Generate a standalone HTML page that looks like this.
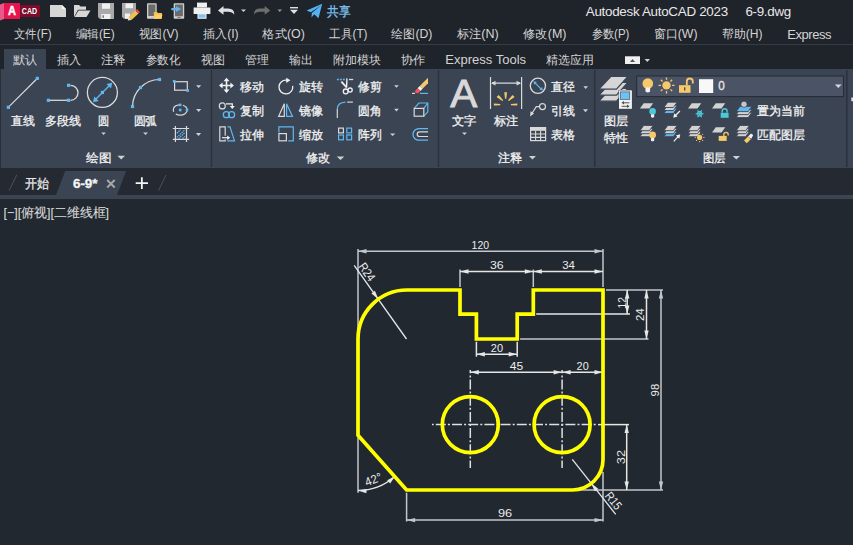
<!DOCTYPE html>
<html><head><meta charset="utf-8">
<style>
*{margin:0;padding:0}
html,body{width:853px;height:545px;overflow:hidden;background:#212830}
svg{position:absolute;left:0;top:0;display:block}
text{font-family:"Liberation Sans",sans-serif;white-space:pre}
</style></head><body>
<svg width="853" height="545" viewBox="0 0 853 545">
<rect x="0" y="0" width="853" height="69" fill="#1f232a"/>
<rect x="0" y="44" width="853" height="1" fill="#363c47"/>
<rect x="0" y="69" width="853" height="99" fill="#3b4453"/>
<rect x="0" y="69" width="1" height="99" fill="#2a2f38"/>
<rect x="0" y="168" width="853" height="27" fill="#242932"/>
<rect x="0" y="195" width="853" height="4" fill="#3b4453"/>
<rect x="0" y="199" width="853" height="346" fill="#212830"/>
<polygon points="0,4.5 4,3 4,19 0,20.5" fill="#e8588a"/>
<rect x="4" y="3" width="16" height="16" fill="#e8144f"/>
<rect x="20" y="5" width="20" height="12" fill="#7d0b2c"/>
<text x="8" y="15.1" font-size="12.6" font-weight="bold" fill="#fff" stroke="#fff" stroke-width="0.5" textLength="8" lengthAdjust="spacingAndGlyphs">A</text>
<text x="21.8" y="13.9" font-size="8.2" font-weight="bold" fill="#fff" textLength="15.3" lengthAdjust="spacingAndGlyphs">CAD</text>
<path d="M50,5 H62 L66,9 V17 H50 Z" fill="#d6d6d6"/><path d="M62,5 L66,9 H62 Z" fill="#f4f4f4"/>
<path d="M74,5 H79 L80.5,6.5 H86 V9.8 H78 L74,17 Z" fill="#d6d6d6"/><path d="M78.5,10.5 H90.5 L86.5,17 H74.5 Z" fill="#d6d6d6"/>
<path d="M98,3 H114 V19 H100 L98,17 Z" fill="#a9a9a9"/><rect x="102" y="3.4" width="8" height="5.4" fill="#f0f0f0"/><rect x="101.3" y="14" width="9.2" height="5" fill="#f0f0f0"/><rect x="102.5" y="15.3" width="1.5" height="2.5" fill="#777"/>
<path d="M122,3 H136 V12 L130,18.8 H124 L122,17 Z" fill="#a9a9a9"/><rect x="125.5" y="3.4" width="7.5" height="4.8" fill="#f0f0f0"/><rect x="125" y="13.5" width="5" height="5.3" fill="#f0f0f0"/>
<path d="M135.5,10.5 L138.5,13.5 L131.5,20 L128.5,17 Z" fill="#f2c14e"/><path d="M135.5,10.5 L137,9 L140,12 L138.5,13.5 Z" fill="#e8434f"/><path d="M128.5,17 L131.5,20 L127.8,20.5 Z" fill="#e0e0e0"/>
<rect x="147" y="3.2" width="9.7" height="15.6" rx="0.8" fill="#cfcfcf"/><rect x="148.3" y="4.5" width="7.1" height="11.5" fill="#6a6a6a"/><path d="M153.8,12 H157 L158,13 H162 V18.8 H153.8 Z" fill="#f2c14e"/><path d="M155,14.8 H162.5 L161,18.8 H153.8 Z" fill="#ffd36a"/>
<rect x="173.7" y="3.2" width="10.5" height="15.6" rx="0.8" fill="#cfcfcf"/><rect x="175" y="4.5" width="7.9" height="11.8" fill="#6a6a6a"/><rect x="177.5" y="17" width="3" height="0.9" fill="#6a6a6a"/>
<path d="M171.3,8 H176 V6.3 L181.2,9.1 L176,11.9 V10.2 H171.3 Z" fill="#5ab4f0"/>
<rect x="197" y="2.6" width="10" height="4.8" fill="#f0f0f0"/><rect x="193.6" y="7.5" width="16.8" height="6.5" fill="#f0f0f0"/><rect x="197.5" y="13" width="9" height="5.8" fill="#f0f0f0"/><rect x="198.6" y="14.3" width="6.8" height="3.4" fill="#7fc4f0"/>
<path d="M218,10.4 L223.5,6 V8.5 H228 Q234.5,8.5 234.3,14.7 Q232.5,11.8 228,11.8 H223.5 V14.7 Z" fill="#e0e0e0"/>
<path d="M241,9.5 H246 L243.5,12 Z" fill="#d0d0d0"/>
<path d="M270.2,10.4 L264.7,6 V8.5 H260.2 Q253.7,8.5 253.9,14.7 Q255.7,11.8 260.2,11.8 H264.7 V14.7 Z" fill="#6e6e6e"/>
<path d="M277.5,9.5 H282 L279.75,12 Z" fill="#9a9a9a"/>
<rect x="290" y="7" width="8" height="1.4" fill="#e0e0e0"/><path d="M290,9.8 H298 L294,14 Z" fill="#e0e0e0"/>
<path d="M306.6,10.5 L322.2,3.8 L318.5,18.2 L314.2,14.3 L311.5,17.5 L311.8,13 L321,5.5 L310.8,12.2 Z" fill="#55b2ee"/>
<text x="327.4" y="16.0" font-size="12.5" fill="#7ec5f4" font-weight="normal" textLength="23.4" lengthAdjust="spacingAndGlyphs" stroke="#7ec5f4" stroke-width="0.3">共享</text>
<text x="585.8" y="15.6" font-size="13.4" fill="#e8e8e8" font-weight="normal" textLength="142.3" lengthAdjust="spacing">Autodesk AutoCAD 2023</text>
<text x="745.4" y="15.6" font-size="13.4" fill="#e8e8e8" font-weight="normal" textLength="45.8" lengthAdjust="spacing">6-9.dwg</text>
<text x="14.0" y="38.3" font-size="12.2" fill="#d4d4d4" font-weight="normal" textLength="37.7" lengthAdjust="spacingAndGlyphs">文件(F)</text>
<text x="75.6" y="38.3" font-size="12.2" fill="#d4d4d4" font-weight="normal" textLength="39.1" lengthAdjust="spacingAndGlyphs">编辑(E)</text>
<text x="138.6" y="38.3" font-size="12.2" fill="#d4d4d4" font-weight="normal" textLength="39.9" lengthAdjust="spacingAndGlyphs">视图(V)</text>
<text x="203.1" y="38.3" font-size="12.2" fill="#d4d4d4" font-weight="normal" textLength="35.6" lengthAdjust="spacingAndGlyphs">插入(I)</text>
<text x="262.4" y="38.3" font-size="12.2" fill="#d4d4d4" font-weight="normal" textLength="42.6" lengthAdjust="spacingAndGlyphs">格式(O)</text>
<text x="329.3" y="38.3" font-size="12.2" fill="#d4d4d4" font-weight="normal" textLength="38.2" lengthAdjust="spacingAndGlyphs">工具(T)</text>
<text x="391.3" y="38.3" font-size="12.2" fill="#d4d4d4" font-weight="normal" textLength="41.1" lengthAdjust="spacingAndGlyphs">绘图(D)</text>
<text x="456.6" y="38.3" font-size="12.2" fill="#d4d4d4" font-weight="normal" textLength="42.1" lengthAdjust="spacingAndGlyphs">标注(N)</text>
<text x="523.2" y="38.3" font-size="12.2" fill="#d4d4d4" font-weight="normal" textLength="43.3" lengthAdjust="spacingAndGlyphs">修改(M)</text>
<text x="591.5" y="38.3" font-size="12.2" fill="#d4d4d4" font-weight="normal" textLength="37.9" lengthAdjust="spacingAndGlyphs">参数(P)</text>
<text x="653.6" y="38.3" font-size="12.2" fill="#d4d4d4" font-weight="normal" textLength="43.9" lengthAdjust="spacingAndGlyphs">窗口(W)</text>
<text x="722.0" y="38.3" font-size="12.2" fill="#d4d4d4" font-weight="normal" textLength="40.5" lengthAdjust="spacingAndGlyphs">帮助(H)</text>
<text x="787.2" y="39.0" font-size="13" fill="#d4d4d4" font-weight="normal" textLength="44.4" lengthAdjust="spacing">Express</text>
<rect x="4" y="49" width="42" height="20" fill="#3b4453"/>
<text x="12.9" y="63.6" font-size="12.2" fill="#d4d4d4" font-weight="normal" textLength="24.5" lengthAdjust="spacingAndGlyphs">默认</text>
<text x="56.7" y="63.6" font-size="12.2" fill="#d4d4d4" font-weight="normal" textLength="24.5" lengthAdjust="spacingAndGlyphs">插入</text>
<text x="100.6" y="63.6" font-size="12.2" fill="#d4d4d4" font-weight="normal" textLength="25.0" lengthAdjust="spacingAndGlyphs">注释</text>
<text x="145.7" y="63.6" font-size="12.2" fill="#d4d4d4" font-weight="normal" textLength="34.8" lengthAdjust="spacingAndGlyphs">参数化</text>
<text x="200.7" y="63.6" font-size="12.2" fill="#d4d4d4" font-weight="normal" textLength="24.1" lengthAdjust="spacingAndGlyphs">视图</text>
<text x="245.4" y="63.6" font-size="12.2" fill="#d4d4d4" font-weight="normal" textLength="23.8" lengthAdjust="spacingAndGlyphs">管理</text>
<text x="288.5" y="63.6" font-size="12.2" fill="#d4d4d4" font-weight="normal" textLength="24.0" lengthAdjust="spacingAndGlyphs">输出</text>
<text x="333.1" y="63.6" font-size="12.2" fill="#d4d4d4" font-weight="normal" textLength="48.3" lengthAdjust="spacingAndGlyphs">附加模块</text>
<text x="400.7" y="63.6" font-size="12.2" fill="#d4d4d4" font-weight="normal" textLength="24.5" lengthAdjust="spacingAndGlyphs">协作</text>
<text x="445.2" y="64.0" font-size="13" fill="#d4d4d4" font-weight="normal" textLength="80.9" lengthAdjust="spacing">Express Tools</text>
<text x="545.8" y="63.6" font-size="12.2" fill="#d4d4d4" font-weight="normal" textLength="47.7" lengthAdjust="spacingAndGlyphs">精选应用</text>
<rect x="625" y="56.3" width="15" height="7.7" fill="#f0f0f0"/><path d="M630,62 H635 L632.5,59 Z" fill="#555"/>
<path d="M644.5,59 H650 L647.25,62 Z" fill="#d0d0d0"/>
<line x1="9.1" y1="190.6" x2="16.7" y2="175" stroke="#4a5260" stroke-width="1"/>
<text x="25.0" y="188.0" font-size="12.5" fill="#e8e8e8" font-weight="normal" textLength="24.2" lengthAdjust="spacingAndGlyphs" stroke="#e8e8e8" stroke-width="0.3">开始</text>
<polygon points="65.2,171 126.2,171 117,195 56,195" fill="#3b4453"/>
<text x="72.9" y="188.2" font-size="12.5" fill="#f4f4f4" font-weight="bold" textLength="24.7" lengthAdjust="spacingAndGlyphs" stroke="#f4f4f4" stroke-width="0.3">6-9*</text>
<path d="M107.2,180 L114.7,187.5 M114.7,180 L107.2,187.5" stroke="#a8a8a8" stroke-width="1.9"/>
<path d="M135.7,183.1 H148 M141.85,177.2 V189" stroke="#f4f4f4" stroke-width="1.8"/>
<line x1="158.5" y1="190.6" x2="166" y2="175" stroke="#4a5260" stroke-width="1"/>
<text x="3.5" y="217.0" font-size="12.5" fill="#d8d8d8" font-weight="normal" textLength="105.5" lengthAdjust="spacingAndGlyphs" stroke="#d8d8d8" stroke-width="0.1">[−][俯视][二维线框]</text>
<rect x="210.75" y="70" width="1.5" height="97" fill="#2c323c"/>
<rect x="437.75" y="70" width="1.5" height="97" fill="#2c323c"/>
<rect x="593.95" y="70" width="1.5" height="97" fill="#2c323c"/>
<rect x="846.05" y="70" width="1.5" height="97" fill="#2c323c"/>
<line x1="9.5" y1="106.2" x2="36.2" y2="79.5" stroke="#d9d9d9" stroke-width="1.2"/><rect x="6.80" y="105.70" width="3.2" height="3.2" fill="#5fb8f2"/><rect x="35.70" y="76.80" width="3.2" height="3.2" fill="#5fb8f2"/>
<text x="11.0" y="125.0" font-size="12" fill="#f2f2f2" font-weight="normal" textLength="23.9" lengthAdjust="spacingAndGlyphs" stroke="#f2f2f2" stroke-width="0.3">直线</text>
<line x1="50" y1="100.3" x2="67" y2="100.3" stroke="#d9d9d9" stroke-width="1.3"/><path d="M70.5,85.3 A7.5,7.5 0 0 1 70.5,100.3" fill="none" stroke="#d9d9d9" stroke-width="1.3"/><rect x="46.80" y="98.70" width="3.2" height="3.2" fill="#5fb8f2"/><rect x="67.00" y="98.70" width="3.2" height="3.2" fill="#5fb8f2"/><rect x="67.00" y="83.70" width="3.2" height="3.2" fill="#5fb8f2"/>
<text x="45.0" y="125.0" font-size="12" fill="#f2f2f2" font-weight="normal" textLength="36.3" lengthAdjust="spacingAndGlyphs" stroke="#f2f2f2" stroke-width="0.3">多段线</text>
<circle cx="102.4" cy="92.45" r="15" fill="none" stroke="#d9d9d9" stroke-width="1.3"/>
<line x1="95" y1="100" x2="110.2" y2="84.8" stroke="#5fb8f2" stroke-width="1.3"/><path d="M93,102.2 L94.2,96.5 L98.7,101 Z M112.2,82.8 L111,88.5 L106.5,84 Z" fill="#5fb8f2"/><rect x="100.80" y="90.85" width="3.2" height="3.2" fill="#5fb8f2"/>
<text x="97.8" y="125.0" font-size="12" fill="#f2f2f2" font-weight="normal" textLength="11.2" lengthAdjust="spacingAndGlyphs" stroke="#f2f2f2" stroke-width="0.3">圆</text>
<path d="M101.3,132.4 H105.8 L103.55,135 Z" fill="#d0d0d0"/>
<path d="M132.5,106.5 A27.32,27.32 0 0 1 159.5,79.5" fill="none" stroke="#d9d9d9" stroke-width="1.2"/><rect x="130.90" y="104.90" width="3.2" height="3.2" fill="#5fb8f2"/><rect x="138.90" y="85.90" width="3.2" height="3.2" fill="#5fb8f2"/><rect x="157.90" y="77.90" width="3.2" height="3.2" fill="#5fb8f2"/>
<text x="133.5" y="125.0" font-size="12" fill="#f2f2f2" font-weight="normal" textLength="23.7" lengthAdjust="spacingAndGlyphs" stroke="#f2f2f2" stroke-width="0.3">圆弧</text>
<path d="M143.1,132.4 H148 L145.55,135 Z" fill="#d0d0d0"/>
<rect x="174.6" y="81.7" width="12.7" height="8.5" fill="none" stroke="#d9d9d9" stroke-width="1.2"/><rect x="172.90" y="80.00" width="2.6" height="2.6" fill="#5fb8f2"/><rect x="186.40" y="89.30" width="2.6" height="2.6" fill="#5fb8f2"/>
<path d="M196.1,85.2 H201.2 L198.64999999999998,88 Z" fill="#d0d0d0"/>
<ellipse cx="180.2" cy="110" rx="6.9" ry="5.2" fill="none" stroke="#d9d9d9" stroke-width="1.2" stroke-dasharray="14 3 10 4"/><rect x="178.90" y="103.60" width="2.6" height="2.6" fill="#5fb8f2"/><rect x="178.90" y="108.70" width="2.6" height="2.6" fill="#5fb8f2"/><rect x="185.70" y="108.70" width="2.6" height="2.6" fill="#5fb8f2"/>
<path d="M196.1,109.1 H201.2 L198.64999999999998,112 Z" fill="#d0d0d0"/>
<path d="M175.4,126 V142 M186.5,126 V142 M172.8,128.5 H189.1 M172.8,139.4 H189.1" stroke="#d9d9d9" stroke-width="1.2"/>
<path d="M176.8,133.2 L180.6,129.6 M176.8,137.4 L184.9,129.8 M178.6,138.6 L185,132.6 M182.6,138.6 L185,136.4" stroke="#5fb8f2" stroke-width="1.3" stroke-dasharray="1.5 0.7"/>
<path d="M195.9,133 H201.1 L198.5,136 Z" fill="#d0d0d0"/>
<text x="86.4" y="162.2" font-size="12" fill="#f2f2f2" font-weight="normal" textLength="25.3" lengthAdjust="spacingAndGlyphs" stroke="#f2f2f2" stroke-width="0.3">绘图</text>
<path d="M117.4,155.8 H125 L121.2,159.5 Z" fill="#d0d0d0"/>
<path d="M220.5,85.5 H232.5 M226.5,79.5 V91.5" stroke="#f0f0f0" stroke-width="1.6"/><path d="M219,85.5 L222.6,82.5 V88.5 Z M233.9,85.5 L230.4,82.5 V88.5 Z M226.5,77.8 L223.5,81.3 H229.5 Z M226.5,93.1 L223.5,89.6 H229.5 Z" fill="#f0f0f0"/>
<text x="240.0" y="91.0" font-size="12" fill="#f2f2f2" font-weight="normal" textLength="24.0" lengthAdjust="spacingAndGlyphs" stroke="#f2f2f2" stroke-width="0.3">移动</text>
<path d="M286.8,80.15 A6.9,6.9 0 1 0 292.7,85.9" fill="none" stroke="#f0f0f0" stroke-width="1.3"/><path d="M290.4,80.3 L286.2,77.7 V82.9 Z" fill="#f0f0f0"/>
<text x="298.7" y="91.0" font-size="12" fill="#f2f2f2" font-weight="normal" textLength="24.3" lengthAdjust="spacingAndGlyphs" stroke="#f2f2f2" stroke-width="0.3">旋转</text>
<circle cx="222.3" cy="105.9" r="3" fill="none" stroke="#d9d9d9" stroke-width="1.2"/><path d="M226,103.9 H232.3 V106.5" fill="none" stroke="#f0f0f0" stroke-width="1.2"/><path d="M229.8,106 H234.8 L232.3,109 Z" fill="#f0f0f0"/><circle cx="226.3" cy="114.7" r="3" fill="none" stroke="#5fb8f2" stroke-width="1.3"/><circle cx="231.6" cy="114.7" r="3" fill="none" stroke="#5fb8f2" stroke-width="1.3"/>
<text x="240.0" y="115.0" font-size="12" fill="#f2f2f2" font-weight="normal" textLength="24.0" lengthAdjust="spacingAndGlyphs" stroke="#f2f2f2" stroke-width="0.3">复制</text>
<path d="M278.6,116.4 L284.3,103.8 V116.4 Z" fill="none" stroke="#d9d9d9" stroke-width="1.2" stroke-linejoin="miter"/><path d="M286.6,103.8 V116.4 H292.5 Z" fill="none" stroke="#5fb8f2" stroke-width="1.2"/>
<text x="298.7" y="115.0" font-size="12" fill="#f2f2f2" font-weight="normal" textLength="24.3" lengthAdjust="spacingAndGlyphs" stroke="#f2f2f2" stroke-width="0.3">镜像</text>
<path d="M225.2,135.8 V126.8 H219.8 V140.8 H225.2 V139.6" fill="none" stroke="#d9d9d9" stroke-width="1.2"/><path d="M222,137.7 H228.5" stroke="#f0f0f0" stroke-width="1.2"/><path d="M230.2,137.7 L227.2,135.5 V139.9 Z" fill="#f0f0f0"/><path d="M227.5,126.8 H230 L234.5,140.8 H227.2" fill="none" stroke="#5fb8f2" stroke-width="1.2"/>
<text x="240.0" y="139.0" font-size="12" fill="#f2f2f2" font-weight="normal" textLength="24.0" lengthAdjust="spacingAndGlyphs" stroke="#f2f2f2" stroke-width="0.3">拉伸</text>
<path d="M278.9,132.5 V126.8 H293.3 V140.8 H288.2" fill="none" stroke="#5fb8f2" stroke-width="1.2"/><rect x="278.9" y="133.6" width="7.5" height="7.2" fill="none" stroke="#d9d9d9" stroke-width="1.2"/>
<text x="298.7" y="139.0" font-size="12" fill="#f2f2f2" font-weight="normal" textLength="24.3" lengthAdjust="spacingAndGlyphs" stroke="#f2f2f2" stroke-width="0.3">缩放</text>
<path d="M336.9,79.5 H344.8" stroke="#5fb8f2" stroke-width="1.3" stroke-dasharray="1.9 1.1"/><path d="M349,79.5 H353.2" stroke="#d9d9d9" stroke-width="1.3"/>
<path d="M346.3,78 L347.6,78.8 L347.3,87.5 H345.7 Z" fill="#f0f0f0"/><path d="M340.6,82.2 L342.2,81 L347.2,87 L346,88 Z" fill="#f0f0f0"/><circle cx="345.7" cy="91.4" r="2.4" fill="none" stroke="#f0f0f0" stroke-width="1.3"/><circle cx="350.1" cy="90.1" r="2.1" fill="none" stroke="#f0f0f0" stroke-width="1.3"/>
<text x="358.4" y="91.0" font-size="12" fill="#f2f2f2" font-weight="normal" textLength="23.5" lengthAdjust="spacingAndGlyphs" stroke="#f2f2f2" stroke-width="0.3">修剪</text>
<path d="M394.1,85.2 H398.8 L396.45000000000005,87.8 Z" fill="#d0d0d0"/>
<path d="M419.8,86 L428,77.7 V83.3 L422.6,88.8 Z" fill="#f7c96a"/><path d="M417.6,88.2 L419.8,86 L422.6,88.8 L420.4,91 Z" fill="#f4f4f4"/><path d="M415.4,90.4 L417.6,88.2 L420.4,91 L418.2,93.2 Q415.2,93.8 414.9,91.6 Z" fill="#f0555a"/><path d="M412,93.4 H415" stroke="#d9d9d9" stroke-width="1.2"/><path d="M419.9,93.4 H428" stroke="#5fb8f2" stroke-width="1.2"/>
<path d="M337.3,118 V109" stroke="#d9d9d9" stroke-width="1.2"/><path d="M337.3,109 Q337.5,102.5 345.5,102.1" fill="none" stroke="#5fb8f2" stroke-width="1.2"/><path d="M347.2,102.1 H352.9" stroke="#d9d9d9" stroke-width="1.2"/>
<text x="358.4" y="115.0" font-size="12" fill="#f2f2f2" font-weight="normal" textLength="23.5" lengthAdjust="spacingAndGlyphs" stroke="#f2f2f2" stroke-width="0.3">圆角</text>
<path d="M394.1,108.8 H398.8 L396.45000000000005,111.5 Z" fill="#d0d0d0"/>
<path d="M414.2,108.4 L418.8,103 H427.8 V111.8 L423.8,116.2 M423.8,108.4 L427.8,103" fill="none" stroke="#5fb8f2" stroke-width="1.2"/><rect x="414.2" y="108.4" width="9.6" height="7.8" fill="none" stroke="#d9d9d9" stroke-width="1.2"/>
<rect x="338.6" y="128.1" width="4.8" height="4.8" fill="none" stroke="#d9d9d9" stroke-width="1.2"/><rect x="346.8" y="128.1" width="4.8" height="4.8" fill="none" stroke="#5fb8f2" stroke-width="1.2"/><rect x="338.6" y="135" width="4.8" height="4.8" fill="none" stroke="#5fb8f2" stroke-width="1.2"/><rect x="346.8" y="135" width="4.8" height="4.8" fill="none" stroke="#5fb8f2" stroke-width="1.2"/>
<text x="358.0" y="139.0" font-size="12" fill="#f2f2f2" font-weight="normal" textLength="23.5" lengthAdjust="spacingAndGlyphs" stroke="#f2f2f2" stroke-width="0.3">阵列</text>
<path d="M390,133.6 H395.3 L392.65,136 Z" fill="#d0d0d0"/>
<path d="M428.1,128.6 H418.8 A5.8,5.8 0 0 0 418.8,140.2 H428.1" fill="none" stroke="#5fb8f2" stroke-width="1.3"/><path d="M428.1,131.9 H419.5 A2.3,2.3 0 0 0 419.5,136.5 H428.1" fill="none" stroke="#d9d9d9" stroke-width="1.2"/>
<text x="305.7" y="162.2" font-size="12" fill="#f2f2f2" font-weight="normal" textLength="24.3" lengthAdjust="spacingAndGlyphs" stroke="#f2f2f2" stroke-width="0.3">修改</text>
<path d="M336.7,156.5 H344.3 L340.5,160 Z" fill="#d0d0d0"/>
<text x="450.3" y="106.8" font-size="39" fill="#d9d9d9" stroke="#d9d9d9" stroke-width="0.9" textLength="27" lengthAdjust="spacingAndGlyphs">A</text>
<text x="452.0" y="125.0" font-size="12" fill="#f2f2f2" font-weight="normal" textLength="24.5" lengthAdjust="spacingAndGlyphs" stroke="#f2f2f2" stroke-width="0.3">文字</text>
<path d="M462,132.4 H467 L464.5,135 Z" fill="#d0d0d0"/>
<path d="M490.5,77.1 V109.1 M521.6,77.1 V109.1 M492,83.2 H520" stroke="#d9d9d9" stroke-width="1.2"/><path d="M491,83.2 L495.5,80.8 V85.6 Z M521.1,83.2 L516.6,80.8 V85.6 Z" fill="#d9d9d9"/>
<path d="M504.3,92.3 H507 L506.3,98.8 H505 Z M496.6,96.9 L498.7,95.1 L503.2,100.2 L502.3,101 Z M514.6,96.9 L512.5,95.1 L508,100.2 L508.9,101 Z M493.8,103.4 L494,105.6 L500.4,105.2 L500.2,104 Z M517.4,103.4 L517.2,105.6 L510.8,105.2 L511,104 Z" fill="#f7c96a"/>
<text x="493.9" y="125.0" font-size="12" fill="#f2f2f2" font-weight="normal" textLength="24.4" lengthAdjust="spacingAndGlyphs" stroke="#f2f2f2" stroke-width="0.3">标注</text>
<circle cx="537.9" cy="85.8" r="7.6" fill="none" stroke="#d9d9d9" stroke-width="1.3"/><line x1="534.5" y1="82.3" x2="541.5" y2="89.3" stroke="#5fb8f2" stroke-width="1.2"/><path d="M533.4,81.2 L536.9,82 L534.2,84.7 Z M542.9,90.6 L539.4,89.8 L542.1,87.1 Z" fill="#5fb8f2"/>
<text x="550.9" y="91.0" font-size="12" fill="#f2f2f2" font-weight="normal" textLength="24.0" lengthAdjust="spacingAndGlyphs" stroke="#f2f2f2" stroke-width="0.3">直径</text>
<path d="M583.4,86.2 H588 L585.7,89 Z" fill="#d0d0d0"/>
<circle cx="542.5" cy="106.6" r="3" fill="none" stroke="#d9d9d9" stroke-width="1.2"/><path d="M539.5,106.6 H536.3 L531.5,114" fill="none" stroke="#d9d9d9" stroke-width="1.2"/><path d="M530.1,116.4 L530.6,111.3 L534,113.5 Z" fill="#d9d9d9"/>
<text x="550.9" y="115.0" font-size="12" fill="#f2f2f2" font-weight="normal" textLength="24.0" lengthAdjust="spacingAndGlyphs" stroke="#f2f2f2" stroke-width="0.3">引线</text>
<path d="M583,109.3 H588 L585.5,112.2 Z" fill="#d0d0d0"/>
<rect x="530.6" y="127.6" width="15" height="13" fill="none" stroke="#d9d9d9" stroke-width="1.2"/><rect x="530.6" y="127.6" width="15" height="3.2" fill="#d9d9d9"/><path d="M530.6,134 H545.6 M530.6,137.4 H545.6 M535.6,130.8 V140.6 M540.6,130.8 V140.6" stroke="#d9d9d9" stroke-width="1.1"/>
<text x="550.9" y="139.0" font-size="12" fill="#f2f2f2" font-weight="normal" textLength="24.0" lengthAdjust="spacingAndGlyphs" stroke="#f2f2f2" stroke-width="0.3">表格</text>
<text x="497.7" y="162.2" font-size="12" fill="#f2f2f2" font-weight="normal" textLength="24.3" lengthAdjust="spacingAndGlyphs" stroke="#f2f2f2" stroke-width="0.3">注释</text>
<path d="M529,156 H535.9 L532.45,159.5 Z" fill="#d0d0d0"/>
<path d="M599,101.2 L610.8,88.5 H627.8 L616.5,101.2 Z" fill="#d6d6d6" stroke="#3b4453" stroke-width="1.2"/>
<path d="M599,95.2 L610.8,82.5 H627.8 L616.5,95.2 Z" fill="#d6d6d6" stroke="#3b4453" stroke-width="1.2"/>
<path d="M599,89.2 L610.8,76.5 H627.8 L616.5,89.2 Z" fill="#d6d6d6" stroke="#3b4453" stroke-width="1.2"/>
<rect x="618.6" y="90" width="13.6" height="19.2" fill="#3b4453"/>
<rect x="619" y="90.4" width="12.9" height="18.4" fill="#f2f2f2"/><rect x="620.2" y="91.9" width="9.6" height="7.5" fill="#6fc0f5" stroke="#3a3f46" stroke-width="0.6"/><path d="M623.5,102.8 H629.4 M621.6,106.3 H627.5" stroke="#505050" stroke-width="1"/><path d="M621.4,102.8 L624,101 V104.6 Z M629.6,106.3 L627,104.5 V108.1 Z" fill="#505050"/>
<text x="604.1" y="125.0" font-size="12" fill="#f2f2f2" font-weight="normal" textLength="24.4" lengthAdjust="spacingAndGlyphs" stroke="#f2f2f2" stroke-width="0.3">图层</text>
<text x="604.1" y="142.3" font-size="12" fill="#f2f2f2" font-weight="normal" textLength="24.4" lengthAdjust="spacingAndGlyphs" stroke="#f2f2f2" stroke-width="0.3">特性</text>
<rect x="636.7" y="76" width="206.8" height="20.6" fill="#4b5466" stroke="#262b33" stroke-width="1"/>
<circle cx="647.8" cy="83.6" r="5.3" fill="#f7c96a"/><path d="M645.5,87.5 H650.1 V91.5 Q647.8,93.5 645.5,91.5 Z" fill="#f4f4f4"/>
<circle cx="666.5" cy="85.4" r="4.2" fill="#f7c96a"/><path d="M672.10,85.40 L674.50,85.40 M670.46,89.36 L672.16,91.06 M666.50,91.00 L666.50,93.40 M662.54,89.36 L660.84,91.06 M660.90,85.40 L658.50,85.40 M662.54,81.44 L660.84,79.74 M666.50,79.80 L666.50,77.40 M670.46,81.44 L672.16,79.74 " stroke="#f7c96a" stroke-width="1.3"/>
<rect x="679" y="85.2" width="11.5" height="7.6" fill="#f7c96a"/><rect x="684" y="87.3" width="1.4" height="3.2" fill="#4b5466"/><path d="M686.8,85.2 V81.5 A3,3 0 0 1 692.8,81.5 V83.5" fill="none" stroke="#f7c96a" stroke-width="1.8"/>
<rect x="699" y="79.2" width="14.2" height="13.8" fill="#f8f8f8"/>
<text x="718.3" y="89.8" font-size="12" fill="#e8e8e8" font-weight="normal" textLength="6.5" lengthAdjust="spacingAndGlyphs" stroke="#e8e8e8" stroke-width="0.3">0</text>
<path d="M834.9,84.4 H841.7 L838.3,88 Z" fill="#d8d8d8"/>
<path d="M639.9,108.6 L643.6999999999999,103.3 H653.1999999999999 L649.4,108.6 Z" fill="#d2d2d2"/><circle cx="652.6" cy="111.4" r="3.3" fill="#4cc9d6"/><path d="M651,114.3 H654.2 V117 Q652.6,118.3 651,117 Z" fill="#f0f0f0"/>
<path d="M663.9,113.5 L667.6999999999999,108.2 H677.1999999999999 L673.4,113.5 Z" fill="#5fb8f2" stroke="#3b4453" stroke-width="0.9"/><path d="M663.9,110.5 L667.6999999999999,105.2 H677.1999999999999 L673.4,110.5 Z" fill="#d2d2d2" stroke="#3b4453" stroke-width="0.9"/><path d="M663.9,107.5 L667.6999999999999,102.2 H677.1999999999999 L673.4,107.5 Z" fill="#d2d2d2" stroke="#3b4453" stroke-width="0.9"/><path d="M679.9,111 L674.5,116.5" stroke="#f0f0f0" stroke-width="1.2"/><path d="M673.3,117.7 L674.2,113.2 L677.6,116.6 Z" fill="#f0f0f0"/>
<path d="M688,108.6 L691.8,103.3 H701.3 L697.5,108.6 Z" fill="#d2d2d2"/><path d="M695.6,113.8 H703.6 M697.6,110.3 L701.6,117.3 M701.6,110.3 L697.6,117.3" stroke="#4cc9d6" stroke-width="1.1"/><polygon points="702.1,113.8 700.85,116 698.35,116 697.1,113.8 698.35,111.6 700.85,111.6" fill="none" stroke="#4cc9d6" stroke-width="1.1"/>
<path d="M712,108.6 L715.8,103.3 H725.3 L721.5,108.6 Z" fill="#d2d2d2"/><rect x="720.7" y="112.8" width="7.9" height="5" fill="#4cc9d6"/><path d="M722.2,112.8 V111.2 A2.45,2.45 0 0 1 727.1,111.2 V112.8" fill="none" stroke="#4cc9d6" stroke-width="1.4"/>
<path d="M736.2,117.6 L740.0,112.3 H752.0 L748.2,117.6 Z" fill="#d2d2d2" stroke="#3b4453" stroke-width="0.9"/><path d="M736.2,114.6 L740.0,109.3 H752.0 L748.2,114.6 Z" fill="#d2d2d2" stroke="#3b4453" stroke-width="0.9"/><path d="M736.2,111.6 L740.0,106.3 H752.0 L748.2,111.6 Z" fill="#5fb8f2" stroke="#3b4453" stroke-width="0.9"/><circle cx="744" cy="104.3" r="3.1" fill="#c8c8c8" stroke="#3b4453" stroke-width="0.7"/>
<text x="757.2" y="115.2" font-size="12" fill="#f2f2f2" font-weight="normal" textLength="47.8" lengthAdjust="spacingAndGlyphs" stroke="#f2f2f2" stroke-width="0.3">置为当前</text>
<path d="M639.9,136.7 L643.6999999999999,131.39999999999998 H653.1999999999999 L649.4,136.7 Z" fill="#d2d2d2" stroke="#3b4453" stroke-width="0.9"/><path d="M639.9,133.7 L643.6999999999999,128.39999999999998 H653.1999999999999 L649.4,133.7 Z" fill="#d2d2d2" stroke="#3b4453" stroke-width="0.9"/><path d="M639.9,130.7 L643.6999999999999,125.39999999999999 H653.1999999999999 L649.4,130.7 Z" fill="#d2d2d2" stroke="#3b4453" stroke-width="0.9"/><circle cx="652.6" cy="134.9" r="3.4" fill="#f7c96a"/><path d="M651,137.9 H654.2 V140.7 Q652.6,142 651,140.7 Z" fill="#f0f0f0"/>
<path d="M663.9,136.7 L667.6999999999999,131.39999999999998 H677.1999999999999 L673.4,136.7 Z" fill="#5fb8f2" stroke="#3b4453" stroke-width="0.9"/><path d="M663.9,133.7 L667.6999999999999,128.39999999999998 H677.1999999999999 L673.4,133.7 Z" fill="#d2d2d2" stroke="#3b4453" stroke-width="0.9"/><path d="M663.9,130.7 L667.6999999999999,125.39999999999999 H677.1999999999999 L673.4,130.7 Z" fill="#d2d2d2" stroke="#3b4453" stroke-width="0.9"/><path d="M673.8,141.4 L679.2,135.4" stroke="#f0f0f0" stroke-width="1.2"/><path d="M680.3,134.3 L679.3,138.8 L675.9,135.4 Z" fill="#f0f0f0"/>
<path d="M688,136.7 L691.8,131.39999999999998 H701.3 L697.5,136.7 Z" fill="#d2d2d2" stroke="#3b4453" stroke-width="0.9"/><path d="M688,133.7 L691.8,128.39999999999998 H701.3 L697.5,133.7 Z" fill="#d2d2d2" stroke="#3b4453" stroke-width="0.9"/><path d="M688,130.7 L691.8,125.39999999999999 H701.3 L697.5,130.7 Z" fill="#d2d2d2" stroke="#3b4453" stroke-width="0.9"/><circle cx="699.6" cy="137.4" r="2.6" fill="#f7c96a"/><circle cx="703.90" cy="137.40" r="0.6" fill="#f7c96a"/><circle cx="702.64" cy="140.44" r="0.6" fill="#f7c96a"/><circle cx="699.60" cy="141.70" r="0.6" fill="#f7c96a"/><circle cx="696.56" cy="140.44" r="0.6" fill="#f7c96a"/><circle cx="695.30" cy="137.40" r="0.6" fill="#f7c96a"/><circle cx="696.56" cy="134.36" r="0.6" fill="#f7c96a"/><circle cx="699.60" cy="133.10" r="0.6" fill="#f7c96a"/><circle cx="702.64" cy="134.36" r="0.6" fill="#f7c96a"/>
<path d="M712,132.6 L715.8,127.3 H725.3 L721.5,132.6 Z" fill="#d2d2d2"/><rect x="718.7" y="135.9" width="8" height="5" fill="#f7c96a"/><path d="M723.8,135.9 V134.5 A2.2,2.2 0 0 1 728.2,134.5 V135.5" fill="none" stroke="#f7c96a" stroke-width="1.3"/>
<path d="M736.2,136.7 L740.0,131.39999999999998 H749.5 L745.7,136.7 Z" fill="#d2d2d2" stroke="#3b4453" stroke-width="0.9"/><path d="M736.2,133.7 L740.0,128.39999999999998 H749.5 L745.7,133.7 Z" fill="#d2d2d2" stroke="#3b4453" stroke-width="0.9"/><path d="M736.2,130.7 L740.0,125.39999999999999 H749.5 L745.7,130.7 Z" fill="#d2d2d2" stroke="#3b4453" stroke-width="0.9"/><path d="M744,140.5 L748,136.5 L750.8,139.3 L746.8,143.3 Z" fill="#f7c96a"/><path d="M748,136.5 L751,133.5 L753.2,135 L751.3,138.8 Z" fill="#f0f0f0"/>
<text x="757.2" y="139.0" font-size="12" fill="#f2f2f2" font-weight="normal" textLength="47.8" lengthAdjust="spacingAndGlyphs" stroke="#f2f2f2" stroke-width="0.3">匹配图层</text>
<text x="702.8" y="162.2" font-size="12" fill="#f2f2f2" font-weight="normal" textLength="22.9" lengthAdjust="spacingAndGlyphs" stroke="#f2f2f2" stroke-width="0.3">图层</text>
<path d="M732.7,156 H740 L736.35,159.5 Z" fill="#d0d0d0"/>
<rect x="851.3" y="97.5" width="1.7" height="3.7" fill="#e0e0e0"/>
<path d="M432,424.6 H596" stroke="#e0e0e0" stroke-width="1.5" stroke-dasharray="10 2.1 2 2.1" stroke-dashoffset="12.4"/>
<path d="M470.3,370 V468 M562.1,370 V468" stroke="#e0e0e0" stroke-width="1.5" stroke-dasharray="10 2.1 2 2.1" stroke-dashoffset="6.7"/>
<line x1="358.00" y1="249.00" x2="358.00" y2="337.00" stroke="#c3c6ca" stroke-width="1.5"/><line x1="603.00" y1="249.00" x2="603.00" y2="287.00" stroke="#c3c6ca" stroke-width="1.5"/><line x1="358.00" y1="251.20" x2="603.00" y2="251.20" stroke="#c3c6ca" stroke-width="1.5"/><path d="M358.00,251.20 L366.50,249.00 L366.50,253.40 Z" fill="#c3c6ca"/><path d="M603.00,251.20 L594.50,253.40 L594.50,249.00 Z" fill="#c3c6ca"/>
<text x="471.6" y="249.3" font-size="11.5" fill="#ececec" textLength="17.5" lengthAdjust="spacingAndGlyphs">120</text>
<line x1="460.00" y1="269.50" x2="460.00" y2="287.00" stroke="#c3c6ca" stroke-width="1.5"/><line x1="533.30" y1="269.50" x2="533.30" y2="287.00" stroke="#c3c6ca" stroke-width="1.5"/>
<line x1="460.00" y1="271.50" x2="533.30" y2="271.50" stroke="#e6e6e6" stroke-width="1.5"/><path d="M460.00,271.50 L468.50,269.30 L468.50,273.70 Z" fill="#e6e6e6"/><path d="M533.30,271.50 L524.80,273.70 L524.80,269.30 Z" fill="#e6e6e6"/><line x1="533.30" y1="271.50" x2="603.00" y2="271.50" stroke="#e6e6e6" stroke-width="1.5"/><path d="M533.30,271.50 L541.80,269.30 L541.80,273.70 Z" fill="#e6e6e6"/><path d="M603.00,271.50 L594.50,273.70 L594.50,269.30 Z" fill="#e6e6e6"/>
<text x="490.0" y="269.2" font-size="11.5" fill="#ececec" textLength="13.6" lengthAdjust="spacingAndGlyphs">36</text><text x="562.2" y="269.2" font-size="11.5" fill="#ececec" textLength="12.7" lengthAdjust="spacingAndGlyphs">34</text>
<line x1="606.00" y1="290.00" x2="663.00" y2="290.00" stroke="#c3c6ca" stroke-width="1.5"/><line x1="536.20" y1="314.10" x2="630.00" y2="314.10" stroke="#e6e6e6" stroke-width="1.5"/><line x1="520.10" y1="339.00" x2="648.50" y2="339.00" stroke="#c3c6ca" stroke-width="1.5"/><line x1="577.00" y1="490.00" x2="663.00" y2="490.00" stroke="#c3c6ca" stroke-width="1.5"/>
<line x1="627.20" y1="290.00" x2="627.20" y2="314.10" stroke="#e6e6e6" stroke-width="1.5"/><path d="M627.20,290.00 L629.40,298.50 L625.00,298.50 Z" fill="#e6e6e6"/><path d="M627.20,314.10 L625.00,305.60 L629.40,305.60 Z" fill="#e6e6e6"/><line x1="646.50" y1="290.00" x2="646.50" y2="339.00" stroke="#e6e6e6" stroke-width="1.5"/><path d="M646.50,290.00 L648.70,298.50 L644.30,298.50 Z" fill="#e6e6e6"/><path d="M646.50,339.00 L644.30,330.50 L648.70,330.50 Z" fill="#e6e6e6"/><line x1="661.00" y1="290.00" x2="661.00" y2="490.00" stroke="#c3c6ca" stroke-width="1.5"/><path d="M661.00,290.00 L663.20,298.50 L658.80,298.50 Z" fill="#c3c6ca"/><path d="M661.00,490.00 L658.80,481.50 L663.20,481.50 Z" fill="#c3c6ca"/>
<text transform="translate(625.80,308.40) rotate(-90.00)" x="0" y="0" font-size="11.5" fill="#ececec" textLength="11.5" lengthAdjust="spacingAndGlyphs">12</text><text transform="translate(644.30,321.00) rotate(-90.00)" x="0" y="0" font-size="11.5" fill="#ececec" textLength="12.7" lengthAdjust="spacingAndGlyphs">24</text><text transform="translate(659.00,396.40) rotate(-90.00)" x="0" y="0" font-size="11.5" fill="#ececec" textLength="12.6" lengthAdjust="spacingAndGlyphs">98</text>
<line x1="476.40" y1="341.70" x2="476.40" y2="356.70" stroke="#e6e6e6" stroke-width="1.5"/><line x1="517.20" y1="341.70" x2="517.20" y2="356.70" stroke="#e6e6e6" stroke-width="1.5"/><line x1="476.40" y1="354.20" x2="517.20" y2="354.20" stroke="#e6e6e6" stroke-width="1.5"/><path d="M476.40,354.20 L484.90,352.00 L484.90,356.40 Z" fill="#e6e6e6"/><path d="M517.20,354.20 L508.70,356.40 L508.70,352.00 Z" fill="#e6e6e6"/>
<text x="490.8" y="351.9" font-size="11.5" fill="#ececec" textLength="12.2" lengthAdjust="spacingAndGlyphs">20</text>
<line x1="470.30" y1="372.30" x2="562.10" y2="372.30" stroke="#e6e6e6" stroke-width="1.5"/><path d="M470.30,372.30 L478.80,370.10 L478.80,374.50 Z" fill="#e6e6e6"/><path d="M562.10,372.30 L553.60,374.50 L553.60,370.10 Z" fill="#e6e6e6"/><line x1="562.10" y1="372.30" x2="603.00" y2="372.30" stroke="#e6e6e6" stroke-width="1.5"/><path d="M562.10,372.30 L570.60,370.10 L570.60,374.50 Z" fill="#e6e6e6"/><path d="M603.00,372.30 L594.50,374.50 L594.50,370.10 Z" fill="#e6e6e6"/>
<text x="509.8" y="370.0" font-size="11.5" fill="#ececec" textLength="13.4" lengthAdjust="spacingAndGlyphs">45</text><text x="576.6" y="370.0" font-size="11.5" fill="#ececec" textLength="12.1" lengthAdjust="spacingAndGlyphs">20</text>
<line x1="598.00" y1="424.60" x2="629.00" y2="424.60" stroke="#e6e6e6" stroke-width="1.5"/><line x1="626.70" y1="424.60" x2="626.70" y2="490.00" stroke="#e6e6e6" stroke-width="1.5"/><path d="M626.70,424.60 L628.90,433.10 L624.50,433.10 Z" fill="#e6e6e6"/><path d="M626.70,490.00 L624.50,481.50 L628.90,481.50 Z" fill="#e6e6e6"/>
<text transform="translate(625.00,464.20) rotate(-90.00)" x="0" y="0" font-size="11.5" fill="#ececec" textLength="14.2" lengthAdjust="spacingAndGlyphs">32</text>
<line x1="406.60" y1="492.70" x2="406.60" y2="521.50" stroke="#c3c6ca" stroke-width="1.5"/><line x1="603.00" y1="472.00" x2="603.00" y2="521.50" stroke="#c3c6ca" stroke-width="1.5"/><line x1="406.60" y1="520.10" x2="603.00" y2="520.10" stroke="#c3c6ca" stroke-width="1.5"/><path d="M406.60,520.10 L415.10,517.90 L415.10,522.30 Z" fill="#c3c6ca"/><path d="M603.00,520.10 L594.50,522.30 L594.50,517.90 Z" fill="#c3c6ca"/>
<text x="498.0" y="517.3" font-size="11.5" fill="#ececec" textLength="14.2" lengthAdjust="spacingAndGlyphs">96</text>
<line x1="354.20" y1="265.40" x2="406.50" y2="339.00" stroke="#e6e6e6" stroke-width="1.3"/>
<path d="M378.12,299.06 L371.40,293.40 L374.99,290.85 Z" fill="#e6e6e6"/>
<text transform="translate(357.89,266.46) rotate(54.60)" x="0" y="0" font-size="12.3" fill="#ececec" textLength="19.5" lengthAdjust="spacingAndGlyphs">R24</text>
<line x1="572.30" y1="459.40" x2="615.70" y2="514.30" stroke="#e6e6e6" stroke-width="1.3"/>
<path d="M591.21,483.33 L598.21,488.63 L594.76,491.36 Z" fill="#e6e6e6"/>
<text transform="translate(604.26,495.96) rotate(51.67)" x="0" y="0" font-size="12.3" fill="#ececec" textLength="19.0" lengthAdjust="spacingAndGlyphs">R15</text>
<line x1="358.00" y1="437.50" x2="358.00" y2="492.70" stroke="#c3c6ca" stroke-width="1.5"/>
<path d="M358.0,490.50 A55.3,55.3 0 0 0 395.00,476.30" fill="none" stroke="#e6e6e6" stroke-width="1.3"/>
<path d="M358.00,490.50 L366.63,488.90 L366.33,493.29 Z" fill="#e6e6e6"/>
<path d="M395.00,476.30 L390.15,483.62 L387.21,480.35 Z" fill="#e6e6e6"/>
<text transform="translate(366.80,486.60) rotate(-22.00)" x="0" y="0" font-size="12" fill="#ececec" textLength="17.5" lengthAdjust="spacingAndGlyphs">42°</text>
<path d="M358.0,339.0 A49.0,49.0 0 0 1 407.0,290.0 H460.0 V314.1 H476.4 V339.0 H517.2 V314.1 H533.3 V290.0 H603.0 V459.5 A30.5,30.5 0 0 1 572.5,490.0 H406.6 L358.0,435.2 Z" fill="none" stroke="#ffff00" stroke-width="3.7" stroke-linejoin="miter"/>
<circle cx="470.3" cy="424.6" r="28.0" fill="none" stroke="#ffff00" stroke-width="3.7"/><circle cx="562.1" cy="424.6" r="28.0" fill="none" stroke="#ffff00" stroke-width="3.7"/>
</svg>
</body></html>
